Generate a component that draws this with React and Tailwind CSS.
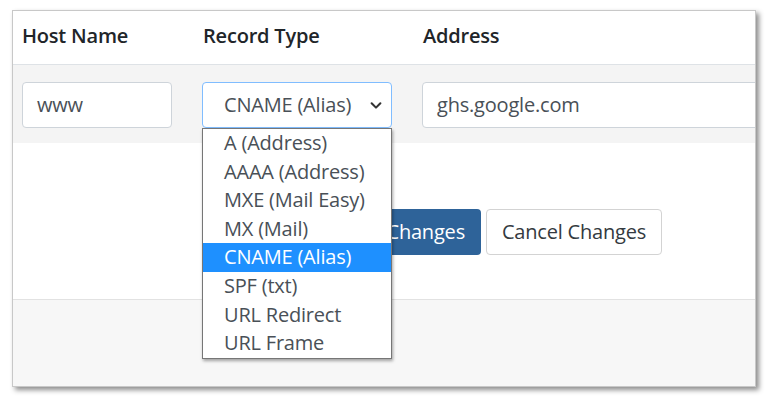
const options = [
  "A (Address)",
  "AAAA (Address)",
  "MXE (Mail Easy)",
  "MX (Mail)",
  "CNAME (Alias)",
  "SPF (txt)",
  "URL Redirect",
  "URL Frame",
];

const App = () => {
  return (
    <div className="w-[768px] h-[396px] bg-white font-['Open_Sans',sans-serif] tracking-[-0.2px] pt-[10px] pl-[12px]">
      <div className="relative w-[744px] h-[377px] bg-white border border-[#c8c8c8] shadow-[3px_3px_5px_rgba(0,0,0,0.45)] flex flex-col overflow-hidden">
        {/* header */}
        <div className="h-[54px] shrink-0 flex items-center pl-[9px] pb-[3px] border-b border-[#dee2e6] text-[20px] font-semibold text-[#212529]">
          <div className="w-[181px]">Host Name</div>
          <div className="w-[220px]">Record Type</div>
          <div>Address</div>
        </div>

        {/* record row */}
        <div className="bg-[#f4f4f4] pt-[17px] pb-[15px] pl-[9px] flex shrink-0">
          <div className="w-[150px] h-[46px] shrink-0 bg-white border border-[#ced4da] rounded-[4px] flex items-center pl-[14px] text-[20px] text-[#495057]">
            www
          </div>
          <div className="relative ml-[30px] w-[190px] h-[46px] shrink-0">
            <div className="w-full h-full bg-white border border-[#80bdff] rounded-[4px] flex items-center pl-[21px] pr-[8px] text-[20px] text-[#495057]">
              <span className="flex-1">CNAME (Alias)</span>
              <svg width="14" height="14" viewBox="0 0 16 16" className="text-[#333]">
                <path d="M3 6l5 5 5-5" fill="none" stroke="currentColor" strokeWidth="2.4" strokeLinecap="round" strokeLinejoin="round" />
              </svg>
            </div>
            {/* open select list */}
            <div className="absolute left-0 top-[46px] w-[190px] bg-white border border-[#767676] shadow-[1px_2px_3px_rgba(0,0,0,0.35)] z-10">
              {options.map((opt) => (
                <div
                  key={opt}
                  className={`h-[28.6px] leading-[28.6px] pl-[21px] text-[20px] whitespace-nowrap ${
                    opt === "CNAME (Alias)"
                      ? "bg-[#1e90ff] text-white"
                      : "text-[#495057]"
                  }`}
                >
                  {opt}
                </div>
              ))}
            </div>
          </div>
          <div className="ml-[30px] w-[400px] h-[46px] shrink-0 bg-white border border-[#ced4da] rounded-[4px] flex items-center pl-[14px] text-[20px] text-[#495057]">
            ghs.google.com
          </div>
        </div>

        {/* actions */}
        <div className="h-[157px] shrink-0 flex items-start pt-[66px] pl-[310px] gap-[5px] border-b border-[#e2e2e2]">
          <button className="h-[46px] px-[16px] rounded-[4px] bg-[#2e6399] text-white text-[20px]">
            Save Changes
          </button>
          <button className="h-[46px] px-[15px] rounded-[4px] bg-white border border-[#d3d3d3] text-[#343a40] text-[20px]">
            Cancel Changes
          </button>
        </div>

        {/* footer */}
        <div className="flex-1 bg-[#f7f7f7]"></div>
      </div>
    </div>
  );
};

export default App;
